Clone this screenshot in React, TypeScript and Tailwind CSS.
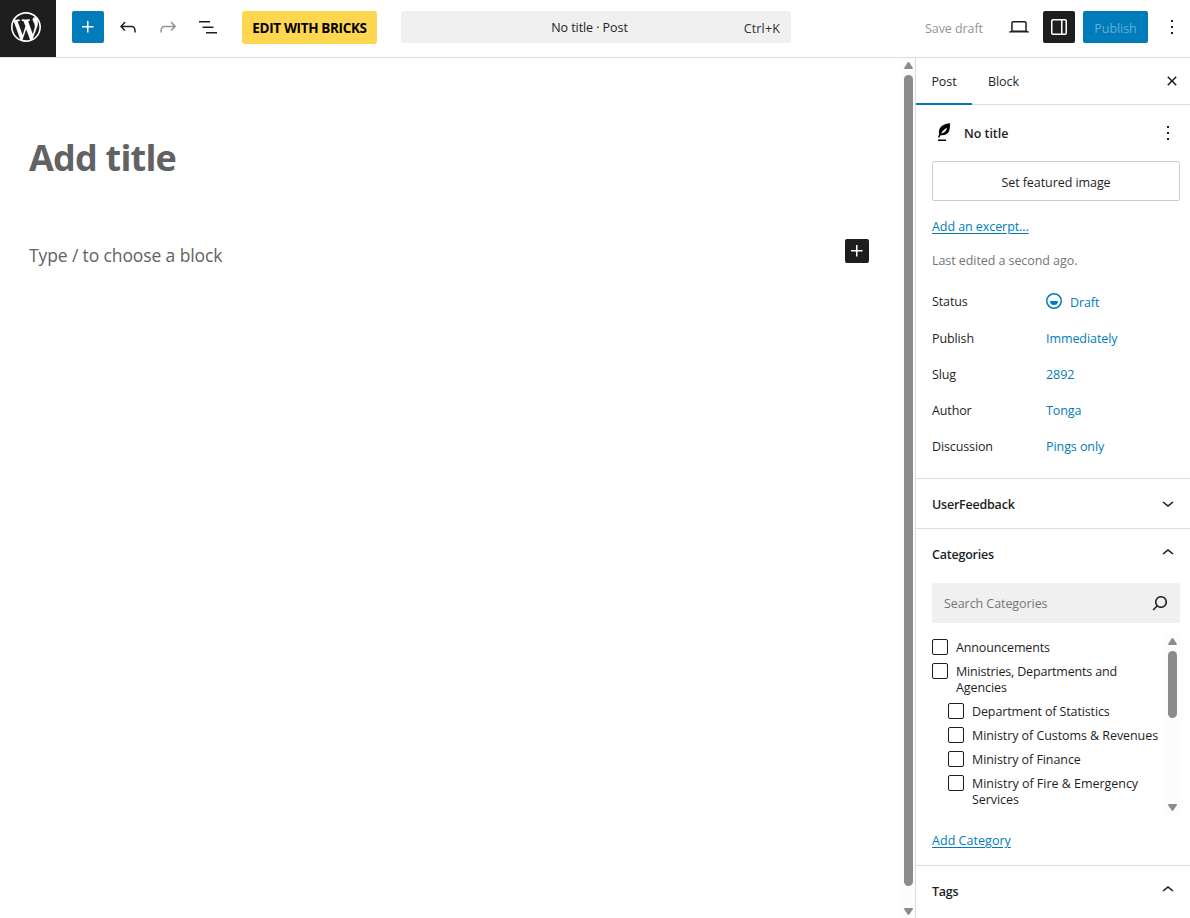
import type { ReactNode } from 'react';

const ICONS = {
  wordpress:
    'M20 10c0-5.51-4.49-10-10-10C4.48 0 0 4.49 0 10c0 5.52 4.48 10 10 10 5.51 0 10-4.48 10-10zM7.78 15.37L4.37 6.22c.55-.02 1.17-.08 1.17-.08.5-.06.44-1.13-.06-1.11 0 0-1.45.11-2.37.11-.18 0-.37 0-.58-.01C4.12 2.69 6.87 1.11 10 1.11c2.33 0 4.45.87 6.05 2.34-.68-.11-1.65.39-1.65 1.58 0 .74.45 1.36.9 2.1.35.61.55 1.36.55 2.46 0 1.49-1.4 5-1.4 5l-3.03-8.37c.54-.02.82-.17.82-.17.5-.05.44-1.25-.06-1.22 0 0-1.44.12-2.38.12-.87 0-2.33-.12-2.33-.12-.5-.03-.56 1.2-.06 1.22l.92.08 1.26 3.41zM17.41 10c.24-.64.74-1.87.43-4.25.7 1.29 1.05 2.71 1.05 4.25 0 3.29-1.73 6.24-4.4 7.78.97-2.59 1.94-5.2 2.92-7.78zM6.1 18.09C3.12 16.65 1.11 13.53 1.11 10c0-1.3.23-2.48.72-3.59C3.25 10.3 4.67 14.2 6.1 18.09zm4.03-6.63l2.58 6.98c-.86.29-1.76.45-2.71.45-.79 0-1.57-.11-2.29-.33.81-2.38 1.62-4.74 2.42-7.1z',
  plus: 'M11 12.5V17.5H12.5V12.5H17.5V11H12.5V6H11V11H6V12.5H11Z',
  undo: 'M18.3 11.7c-.6-.6-1.4-.9-2.3-.9H6.7l2.9-3.3-1.1-1-4.5 5L8.5 16l1-1-2.7-2.7H16c.5 0 .9.2 1.3.5 1 1 1 3.4 1 4.5v.3h1.5v-.2c0-1.5 0-4.3-1.5-5.7z',
  redo: 'M15.6 6.5l-1.1 1 2.9 3.3H8c-.9 0-1.7.3-2.3.9-1.4 1.5-1.4 4.2-1.4 5.6v.2h1.5v-.3c0-1.1 0-3.5 1-4.5.3-.3.7-.5 1.3-.5h9.2L14.5 15l1.1 1.1 4.6-4.6-4.6-5z',
  list: 'M3 6h11v1.5H3V6Zm3.5 5.5h11V13h-11v-1.5ZM21 17H10v1.5h11V17Z',
  desktop:
    'M20.5 16h-.7V8c0-1.1-.9-2-2-2H6.2c-1.1 0-2 .9-2 2v8h-.7c-.8 0-1.5.7-1.5 1.5h20c0-.8-.7-1.5-1.5-1.5zM5.7 8c0-.3.2-.5.5-.5h11.6c.3 0 .5.2.5.5v7.6H5.7V8z',
  drawer:
    'M18 4H6c-1.1 0-2 .9-2 2v12c0 1.1.9 2 2 2h12c1.1 0 2-.9 2-2V6c0-1.1-.9-2-2-2zm-4 14.5H6c-.3 0-.5-.2-.5-.5V6c0-.3.2-.5.5-.5h8v13zm4.5-.5c0 .3-.2.5-.5.5h-2.5v-13H18c.3 0 .5.2.5.5v12z',
  more: 'M13 19h-2v-2h2v2zm0-6h-2v-2h2v2zm0-6h-2V5h2v2z',
  close:
    'M12 13.06l3.712 3.713 1.061-1.06L13.061 12l3.712-3.712-1.06-1.06L12 10.938 8.288 7.227l-1.061 1.06L10.939 12l-3.712 3.712 1.06 1.061L12 13.061z',
  down: 'M17.5 11.6L12 16l-5.5-4.4.9-1.2L12 14l4.5-3.6 1 1.2z',
  up: 'M6.5 12.4L12 8l5.5 4.4-.9 1.2L12 10l-4.5 3.6-1-1.2z',
  search:
    'M13 5c-3.3 0-6 2.7-6 6 0 1.4.5 2.7 1.3 3.7l-3.8 3.8 1.1 1.1 3.8-3.8c1 .8 2.3 1.3 3.7 1.3 3.3 0 6-2.7 6-6S16.3 5 13 5zm0 10.5c-2.5 0-4.5-2-4.5-4.5s2-4.5 4.5-4.5 4.5 2 4.5 4.5-2 4.5-4.5 4.5z',
  draft:
    'M12 18.5a6.5 6.5 0 1 1 0-13 6.5 6.5 0 0 1 0 13ZM4 12a8 8 0 1 1 16 0 8 8 0 0 1-16 0Zm8 4a4 4 0 0 0 4-4H8a4 4 0 0 0 4 4Z',
  quill:
    'M18.100 2.200C12 2.600 7.500 5.500 7 10c-.1 1.200 0 2 .2 3L6 16.400h1.500l1-2.200c4.200.6 7.800-1.400 8.900-5 .6-2 .6-4.900.7-7zM9.200 12.600C10 10.500 12 8.600 14.900 6.800 14.800 9.600 12.700 12 9.200 12.600zM6 18.500h8V20H6z',
};

function Icon({ name, className = 'size-6' }: { name: keyof typeof ICONS; className?: string }) {
  return (
    <svg
      viewBox={name === 'wordpress' ? '-2 -2 24 24' : '0 0 24 24'}
      className={`shrink-0 fill-current ${className}`}
      fillRule="evenodd"
      aria-hidden="true"
    >
      <path d={ICONS[name]} />
    </svg>
  );
}

function Arrow({ down = false }: { down?: boolean }) {
  return (
    <svg viewBox="0 0 9 7" className={`h-[7px] w-[9px] shrink-0 fill-[#8b8b8b] ${down ? 'rotate-180' : ''}`} aria-hidden="true">
      <path d="M3.700.5Q4.500-.3 5.300.5L8.800 5.700Q9.200 7 8 7H1Q-.2 7 .2 5.700Z" />
    </svg>
  );
}

function Row({ label, children, icon, className = 'h-9' }: { label: string; children: ReactNode; icon?: ReactNode; className?: string }) {
  return (
    <div className={`flex items-center ${className}`}>
      <span className="w-[114px] pt-0.5 tracking-[-0.12px]">{label}</span>
      <button className="flex items-center text-[#007cba]">
        {icon}
        <span className={icon ? 'pt-[3px] tracking-[-0.1px]' : 'pt-0.5'}>{children}</span>
      </button>
    </div>
  );
}

function PanelTitle({ children, open = false }: { children: ReactNode; open?: boolean }) {
  return (
    <button className="flex h-[49px] w-full items-center justify-between pr-2.5 pl-4 font-semibold">
      <span className="pt-1 tracking-[-0.22px]">{children}</span>
      <span className="pb-0.5">
        <Icon name={open ? 'up' : 'down'} />
      </span>
    </button>
  );
}

function Check({ children, nested = false }: { children: ReactNode; nested?: boolean }) {
  return (
    <label className={`mb-[7px] flex items-start gap-2 ${nested ? 'pl-4' : ''}`}>
      <span className="size-4 shrink-0 rounded-[2px] border border-[#1e1e1e]" />
      <span className="pt-px leading-4 whitespace-nowrap">{children}</span>
    </label>
  );
}

export default function App() {
  return (
    <div className="flex h-[918px] w-[1190px] flex-col overflow-hidden bg-white font-['Open_Sans','Noto_Sans',sans-serif] text-[12.500px] tracking-[-0.07px] text-[#1e1e1e]">
      <header className="flex h-[58px] shrink-0 border-b border-[#ddd]">
        <div className="flex w-14 items-center bg-[#1e1e1e] pb-[3px] pl-2 text-white">
          <Icon name="wordpress" className="size-9" />
        </div>
        <div className="flex flex-1 items-start pt-[11px] pl-4">
          <button className="flex size-8 items-center justify-center rounded-[2px] bg-[#007cba] text-white">
            <Icon name="plus" />
          </button>
          <button className="ml-3 flex h-8 items-center">
            <Icon name="undo" />
          </button>
          <button className="ml-4 flex h-8 items-center text-[#949494]">
            <Icon name="redo" />
          </button>
          <button className="ml-4 flex h-8 items-center">
            <Icon name="list" />
          </button>
          <button className="ml-[22px] flex h-[33px] w-[135px] items-center justify-center rounded-[3px] bg-[#ffd64f] pt-px text-[13.500px] font-bold whitespace-nowrap tracking-[-0.35px] text-black">
            EDIT WITH BRICKS
          </button>
          <div className="ml-6 flex h-8 w-[390px] items-center rounded-[4px] bg-[#f0f0f0] pr-[11px]">
            <span className="w-[60px]" />
            <span className="flex-1 pt-0.5 pr-0.5 text-center">No title · Post</span>
            <span className="w-[60px] pt-1 text-right tracking-[0.15px] text-[#2f2f2f]">Ctrl+K</span>
          </div>
          <span className="ml-[134px] flex h-8 w-[58px] items-center pt-1 whitespace-nowrap text-[#949494]">Save draft</span>
          <button className="ml-6 flex h-8 items-center">
            <Icon name="desktop" />
          </button>
          <button className="ml-3 flex size-8 items-center justify-center rounded-[2px] bg-[#1e1e1e] text-white">
            <Icon name="drawer" />
          </button>
          <button className="ml-2 flex h-8 w-[65px] items-center justify-center rounded-[2px] bg-[#007cba] pt-1 tracking-[-0.07px] text-[#66b0d6]">
            Publish
          </button>
          <button className="ml-3 flex h-8 items-center">
            <Icon name="more" />
          </button>
        </div>
      </header>

      <div className="flex min-h-0 flex-1">
        <main className="flex-1 pt-[73px] pr-8 pl-[29px] text-[#626262]">
          <h1 className="text-[36px] leading-[54px] font-bold tracking-[-0.8px]">Add title</h1>
          <div className="mt-[54px] flex items-start justify-between">
            <p className="pt-0.5 text-[17.500px] leading-7 tracking-[-0.12px]">Type / to choose a block</p>
            <button className="flex size-6 items-center justify-center rounded-[2px] bg-[#1e1e1e] text-white">
              <Icon name="plus" />
            </button>
          </div>
        </main>
        <div className="flex w-3.5 flex-col items-center bg-[#fcfcfc] pt-1 pb-[3px] pl-px">
          <Arrow />
          <div className="mt-1.5 mb-[22px] w-[9px] flex-1 rounded-full bg-[#8b8b8b]" />
          <Arrow down />
        </div>

        <aside className="flex w-[275px] flex-col border-l border-[#ddd]">
          <div className="flex h-[47px] shrink-0 border-b border-[#ddd]">
            <button className="-mb-px h-[47px] w-14 border-b-2 border-[#007cba] pt-[3px]">Post</button>
            <button className="h-[47px] w-[63px] pt-0.5">Block</button>
            <button className="mr-1.5 ml-auto">
              <Icon name="close" />
            </button>
          </div>
          <section className="h-[374px] shrink-0 border-b border-[#ddd] pt-4 pr-2.5 pl-4">
            <div className="flex h-6 items-center">
              <span className="text-black">
                <Icon name="quill" />
              </span>
              <span className="ml-2 pt-0.5 font-semibold tracking-[-0.05px]">No title</span>
              <button className="ml-auto">
                <Icon name="more" />
              </button>
            </div>
            <button className="mt-4 flex h-10 w-[248px] items-center justify-center rounded-[2px] border border-[#ccc] pt-1">
              Set featured image
            </button>
            <a className="mt-[17px] block leading-[18px] text-[#007cba] underline underline-offset-2">Add an excerpt…</a>
            <p className="mt-4 leading-[18px] text-[#757575]">Last edited a second ago.</p>
            <div className="mt-[13px]">
              <Row
                label="Status"
                className="h-[37px]"
                icon={
                  <span className="mr-1 -ml-1 flex pb-0.5">
                    <Icon name="draft" />
                  </span>
                }
              >
                Draft
              </Row>
              <Row label="Publish">Immediately</Row>
              <Row label="Slug">2892</Row>
              <Row label="Author">Tonga</Row>
              <Row label="Discussion">Pings only</Row>
            </div>
          </section>
          <section className="border-b border-[#ddd]">
            <PanelTitle>UserFeedback</PanelTitle>
          </section>
          <section className="h-[337px] shrink-0 border-b border-[#ddd]">
            <PanelTitle open>Categories</PanelTitle>
            <div className="mt-[5px] ml-4 flex h-10 w-[248px] items-center justify-between rounded-[2px] bg-[#f0f0f0] pr-2 pl-3 text-[#757575]">
              <span className="pt-0.5">Search Categories</span>
              <span className="text-[#1e1e1e]">
                <Icon name="search" />
              </span>
            </div>
            <div className="mt-2.5 ml-4 flex h-[182px] w-[248px] justify-between">
              <div className="w-[233px] overflow-hidden pt-1.5">
                <Check>
                  <span className="tracking-[-0.15px]">Announcements</span>
                </Check>
                <Check>
                  <span className="tracking-[-0.18px]">Ministries, Departments and</span>
                  <br />
                  Agencies
                </Check>
                <Check nested>
                  <span className="tracking-[-0.12px]">Department of Statistics</span>
                </Check>
                <Check nested>Ministry of Customs &amp; Revenues</Check>
                <Check nested>Ministry of Finance</Check>
                <Check nested>
                  <span className="tracking-[-0.03px]">Ministry of Fire &amp; Emergency</span>
                  <br />
                  Services
                </Check>
              </div>
              <div className="flex w-[15px] flex-col items-center bg-[#fcfcfc] pt-[5px] pb-1">
                <Arrow />
                <div className="mt-1.5 mb-auto h-[67px] w-[9px] rounded-full bg-[#8b8b8b]" />
                <Arrow down />
              </div>
            </div>
            <a className="mt-[17px] ml-4 block leading-[18px] tracking-[0.04px] text-[#007cba] underline underline-offset-2">Add Category</a>
          </section>
          <PanelTitle open>Tags</PanelTitle>
        </aside>
      </div>
    </div>
  );
}
